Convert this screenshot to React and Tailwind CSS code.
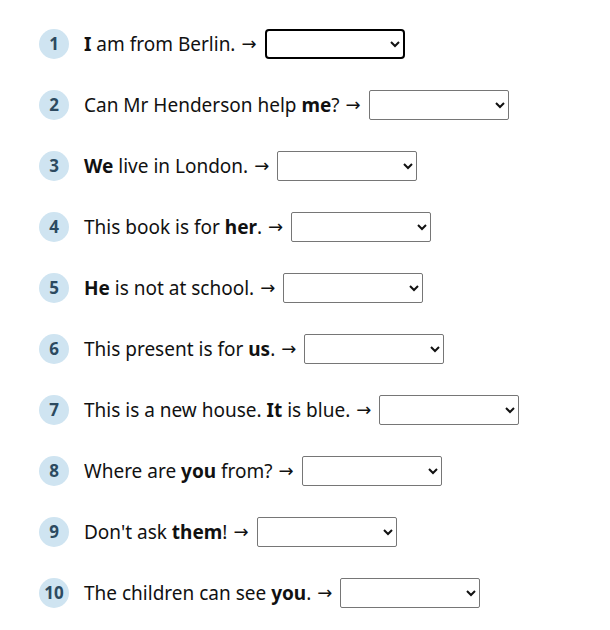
const ITEMS = [
  ["", "I", " am from Berlin."],
  ["Can Mr Henderson help ", "me", "?"],
  ["", "We", " live in London."],
  ["This book is for ", "her", "."],
  ["", "He", " is not at school."],
  ["This present is for ", "us", "."],
  ["This is a new house. ", "It", " is blue."],
  ["Where are ", "you", " from?"],
  ["Don't ask ", "them", "!"],
  ["The children can see ", "you", "."],
];

export default function App() {
  return (
    <div className="min-h-screen bg-white pl-[39px] pt-[29px] font-['Noto_Sans','Open_Sans',sans-serif] text-[19px] text-[#111]">
      <ol className="flex flex-col gap-[31px]">
        {ITEMS.map(([pre, bold, post], i) => (
          <li key={i} className="flex h-[30px] items-center">
            <span className="flex h-[30px] w-[30px] shrink-0 items-center justify-center rounded-full bg-[#cfe4f1] text-[17px] font-bold text-[#2c4a60]">
              {i + 1}
            </span>
            <span className="ml-[15px] whitespace-pre">
              {pre}
              <b className="font-bold">{bold}</b>
              {post}
            </span>
            <span className="ml-[6px] font-['DejaVu_Sans',sans-serif] text-[18px] leading-none">→</span>
            <select
              className={
                i === 0
                  ? "ml-[8px] h-[30px] w-[140px] rounded-[4px] border-2 border-black bg-white outline-none"
                  : "ml-[8px] h-[30px] w-[140px] rounded-[2px] border border-[#767676] bg-white"
              }
              defaultValue=""
            >
              <option value=""></option>
            </select>
          </li>
        ))}
      </ol>
    </div>
  );
}
